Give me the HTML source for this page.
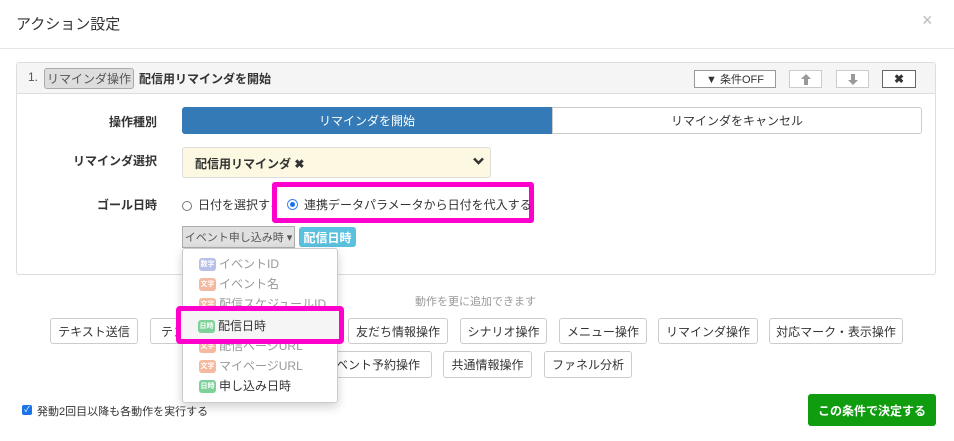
<!DOCTYPE html>
<html><head><meta charset="utf-8">
<style>
*{box-sizing:border-box;margin:0;padding:0}
body{width:954px;height:441px;background:#fff;font-family:"Liberation Sans","Noto Sans CJK JP",sans-serif;font-size:12px;color:#333;position:relative;overflow:hidden}
.a{position:absolute}
.btn{position:absolute;border:1px solid #ccc;border-radius:3px;background:#fff;display:flex;align-items:center;justify-content:center;font-size:12px;color:#333;white-space:nowrap}
.lbl{position:absolute;font-weight:bold;font-size:12px;text-align:right;width:140px}
.tag{display:inline-block;width:17px;height:13px;border-radius:3px;font-size:7px;color:#fff;text-align:center;line-height:13px;vertical-align:middle;margin-right:3px;font-weight:bold}
.mi{position:absolute;left:16px;font-size:12px;color:#999;white-space:nowrap}
</style></head><body>
<div class="a" style="left:16px;top:13px;font-size:15px;color:#333">アクション設定</div>
<div class="a" style="left:922px;top:10px;font-size:18px;color:#bbb">×</div>
<div class="a" style="left:0;top:48px;width:954px;height:1px;background:#e5e5e5"></div>

<div class="a" style="left:16px;top:62px;width:920px;height:213px;border:1px solid #ddd;border-radius:3px"></div>
<div class="a" style="left:17px;top:63px;width:918px;height:31px;background:#f5f5f5;border-bottom:1px solid #ddd"></div>
<div class="a" style="left:28px;top:70px;color:#555">1.</div>
<div class="btn" style="left:44px;top:68px;width:90px;height:21px;background:#ddd;border-color:#aaa;color:#555">リマインダ操作</div>
<div class="a" style="left:139px;top:70px;font-weight:bold">配信用リマインダを開始</div>
<div class="btn" style="left:694px;top:70px;width:82px;height:18px;border-color:#999;border-radius:0;font-size:11px">▼ 条件OFF</div>
<div class="btn" style="left:789px;top:70px;width:33px;height:18px;border-radius:0"><svg width="10" height="11" viewBox="0 0 10 11"><path d="M5 0L10 5H7V11H3V5H0Z" fill="#999"/></svg></div>
<div class="btn" style="left:836px;top:70px;width:33px;height:18px;border-radius:0"><svg width="10" height="11" viewBox="0 0 10 11"><path d="M5 11L10 6H7V0H3V6H0Z" fill="#999"/></svg></div>
<div class="btn" style="left:882px;top:70px;width:34px;height:18px;border-color:#666;border-radius:0;font-weight:bold">✖</div>

<div class="lbl" style="left:17px;top:113px">操作種別</div>
<div class="a" style="left:182px;top:107px;width:370px;height:27px;background:#337ab7;border-radius:3px 0 0 3px;color:#fff;display:flex;align-items:center;justify-content:center">リマインダを開始</div>
<div class="a" style="left:552px;top:107px;width:370px;height:27px;border:1px solid #ccc;border-radius:0 3px 3px 0;display:flex;align-items:center;justify-content:center">リマインダをキャンセル</div>

<div class="lbl" style="left:17px;top:152px">リマインダ選択</div>
<div class="a" style="left:182px;top:147px;width:309px;height:31px;background:#fdf8e1;border:1px solid #ddd;border-radius:3px"></div>
<div class="a" style="left:195px;top:155px;font-weight:bold">配信用リマインダ ✖</div>
<svg class="a" style="left:473px;top:157px" width="11" height="8" viewBox="0 0 11 8"><path d="M1 1.5L5.5 6L10 1.5" stroke="#333" stroke-width="2.5" fill="none"/></svg>

<div class="lbl" style="left:17px;top:196px">ゴール日時</div>
<div class="a" style="left:182px;top:201px;width:10px;height:10px;border:1px solid #777;border-radius:50%"></div>
<div class="a" style="left:198px;top:196px">日付を選択する</div>
<div class="a" style="left:272px;top:182px;width:262px;height:41px;border:5px solid #f0c;border-radius:3px;background:#fff"></div>
<div class="a" style="left:287px;top:199px;width:11px;height:11px;border:1px solid #3b82f6;border-radius:50%;padding:2px"><div style="width:5px;height:5px;background:#1a73e8;border-radius:50%"></div></div>
<div class="a" style="left:304px;top:196px">連携データパラメータから日付を代入する</div>

<div class="btn" style="left:182px;top:226px;width:113px;height:22px;background:#e0e0e0;border-color:#adadad;border-radius:0;font-size:11px;color:#555">イベント申し込み時 ▾</div>
<div class="a" style="left:299px;top:227px;width:57px;height:20px;background:#5bc0de;border-radius:3px;color:#fff;font-weight:bold;display:flex;align-items:center;justify-content:center">配信日時</div>

<div class="a" style="left:415px;top:293px;color:#999;font-size:11px">動作を更に追加できます</div>
<div class="btn" style="left:50px;top:318px;width:88px;height:26px">テキスト送信</div>
<div class="btn" style="left:150px;top:318px;width:100px;height:26px;justify-content:flex-start;padding-left:10px">テンプレート送信</div>
<div class="btn" style="left:348px;top:318px;width:100px;height:26px">友だち情報操作</div>
<div class="btn" style="left:460px;top:318px;width:87px;height:26px">シナリオ操作</div>
<div class="btn" style="left:559px;top:318px;width:88px;height:26px">メニュー操作</div>
<div class="btn" style="left:658px;top:318px;width:100px;height:26px">リマインダ操作</div>
<div class="btn" style="left:769px;top:318px;width:134px;height:26px">対応マーク・表示操作</div>
<div class="btn" style="left:230px;top:351px;width:100px;height:27px"></div>
<div class="btn" style="left:320px;top:351px;width:112px;height:27px;justify-content:flex-end;padding-right:11px">イベント予約操作</div>
<div class="btn" style="left:443px;top:351px;width:89px;height:27px">共通情報操作</div>
<div class="btn" style="left:544px;top:351px;width:88px;height:27px">ファネル分析</div>

<div class="a" style="left:182px;top:248px;width:156px;height:155px;background:#fff;border:1px solid #ccc;border-radius:3px;box-shadow:0 4px 10px rgba(0,0,0,.18)">
 <div class="mi" style="top:6px"><span class="tag" style="background:#b8c0e8">数字</span>イベントID</div>
 <div class="mi" style="top:26px"><span class="tag" style="background:#f5b9a0">文字</span>イベント名</div>
 <div class="mi" style="top:46px"><span class="tag" style="background:#f5b9a0">文字</span>配信スケジュールID</div>
 <div class="mi" style="top:88px"><span class="tag" style="background:#f5b9a0">文字</span>配信ページURL</div>
 <div class="mi" style="top:108px"><span class="tag" style="background:#f5b9a0">文字</span>マイページURL</div>
 <div class="mi" style="top:128px;color:#333"><span class="tag" style="background:#7fd19a">日時</span>申し込み日時</div>
</div>
<div class="a" style="left:176px;top:306px;width:168px;height:38px;border:5px solid #f0c;border-radius:4px;background:#f5f5f5"></div>
<div class="a" style="left:198px;top:317px;white-space:nowrap"><span class="tag" style="background:#7fd19a">日時</span>配信日時</div>

<div class="a" style="left:22px;top:405px;width:10px;height:10px;background:#1a73e8;border-radius:2px;color:#fff;font-size:8px;line-height:10px;text-align:center">✓</div>
<div class="a" style="left:37px;top:403px;font-size:11px">発動2回目以降も各動作を実行する</div>
<div class="a" style="left:808px;top:394px;width:128px;height:32px;background:#0f9d0f;border-radius:3px;color:#fff;font-weight:bold;display:flex;align-items:center;justify-content:center">この条件で決定する</div>
</body></html>
